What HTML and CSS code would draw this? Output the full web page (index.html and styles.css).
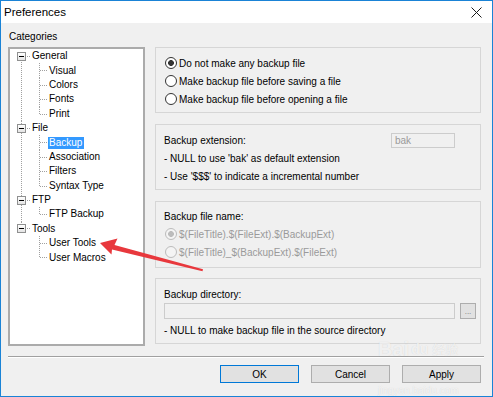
FILE: index.html
```html
<!DOCTYPE html>
<html>
<head>
<meta charset="utf-8">
<link rel="stylesheet" href="styles.css">
</head>
<body>
<div class="window">
  <div class="titlebar">
    <span class="title">Preferences</span>
    <svg class="close" width="11" height="11" viewBox="0 0 11 11"><path d="M0.5 0.5 L10.5 10.5 M10.5 0.5 L0.5 10.5" stroke="#1a1a1a" stroke-width="1" fill="none"/></svg>
  </div>
  <div class="client">
    <div class="cat-label">Categories</div>
    <div class="main">
      <div class="tree">
        <div class="node first">
          <div class="row root"><span class="exp"></span><span class="hdots"></span><span class="label">General</span></div>
          <div class="row child"><span class="label">Visual</span></div>
          <div class="row child"><span class="label">Colors</span></div>
          <div class="row child"><span class="label">Fonts</span></div>
          <div class="row child last"><span class="label">Print</span></div>
        </div>
        <div class="node">
          <div class="row root"><span class="exp"></span><span class="hdots"></span><span class="label">File</span></div>
          <div class="row child"><span class="label selected">Backup</span></div>
          <div class="row child"><span class="label">Association</span></div>
          <div class="row child"><span class="label">Filters</span></div>
          <div class="row child last"><span class="label">Syntax Type</span></div>
        </div>
        <div class="node">
          <div class="row root"><span class="exp"></span><span class="hdots"></span><span class="label">FTP</span></div>
          <div class="row child last"><span class="label">FTP Backup</span></div>
        </div>
        <div class="node lastnode">
          <div class="row root"><span class="exp"></span><span class="hdots"></span><span class="label">Tools</span></div>
          <div class="row child"><span class="label">User Tools</span></div>
          <div class="row child last"><span class="label">User Macros</span></div>
        </div>
      </div>
      <div class="groups">
        <div class="group g1">
          <div class="grow"><span class="radio checked"></span><span class="rtext">Do not make any backup file</span></div>
          <div class="grow"><span class="radio"></span><span class="rtext">Make backup file before saving a file</span></div>
          <div class="grow"><span class="radio"></span><span class="rtext">Make backup file before opening a file</span></div>
        </div>
        <div class="group g2">
          <div class="grow split"><span>Backup extension:</span><span class="input ext">bak</span></div>
          <div class="grow">- NULL to use 'bak' as default extension</div>
          <div class="grow">- Use '$$$' to indicate a incremental number</div>
        </div>
        <div class="group g3">
          <div class="grow">Backup file name:</div>
          <div class="grow disabled"><span class="radio dis checked"></span><span class="rtext">$(FileTitle).$(FileExt).$(BackupExt)</span></div>
          <div class="grow disabled"><span class="radio dis"></span><span class="rtext">$(FileTitle)_$(BackupExt).$(FileExt)</span></div>
        </div>
        <div class="group g4">
          <div class="grow">Backup directory:</div>
          <div class="grow top"><span class="input dir"></span><span class="browse">...</span></div>
          <div class="grow">- NULL to make backup file in the source directory</div>
        </div>
      </div>
    </div>
    <div class="sep"></div>
    <div class="buttons">
      <span class="btn default">OK</span>
      <span class="btn">Cancel</span>
      <span class="btn">Apply</span>
    </div>
  </div>
  <div class="watermark">
    <div class="wm-top"><span class="wm-bai">Bai</span><span class="wm-paw">du</span><span class="wm-cn">经验</span></div>
    <div class="wm-url">jingyan.baidu.com</div>
  </div>
  <svg class="arrow" width="493" height="397" viewBox="0 0 493 397">
    <polygon points="100,243 117.5,238.5 114.5,245 203,269.3 202.5,271.2 112,249.5 111.5,254.5" fill="#e8383d"/>
  </svg>
</div>
</body>
</html>
```

FILE: styles.css
```css
html, body {
  margin: 0;
  padding: 0;
  background: #ffffff;
}
body {
  font-family: "Liberation Sans", Arial, sans-serif;
  font-size: 10px;
  color: #000;
}
.window {
  width: 493px;
  height: 397px;
  box-sizing: border-box;
  border: 1px solid #1a83d6;
  background: #f0f0f0;
  position: relative;
  display: flex;
  flex-direction: column;
  overflow: hidden;
}
.titlebar {
  height: 22px;
  background: #fff;
  display: flex;
  align-items: center;
  justify-content: space-between;
  padding: 0 10px 0 3px;
  flex: none;
}
.title {
  font-size: 11.5px;
  color: #000;
}
.close {
  display: block;
}
.client {
  flex: 1;
  display: flex;
  flex-direction: column;
  padding: 7px 11px 0 7px;
}
.cat-label {
  line-height: 14px;
  height: 14px;
  padding-left: 1px;
}
.main {
  display: flex;
  gap: 10px;
  margin-top: 3px;
}
.tree {
  width: 137px;
  height: 299px;
  box-sizing: border-box;
  border: 2px solid #ababab;
  background: #fff;
}
.node {
  background-image: repeating-linear-gradient(to bottom, #a0a0a0 0 1px, transparent 1px 2px);
  background-repeat: no-repeat;
  background-position: 11px 0;
  background-size: 1px 100%;
}
.node.first {
  background-position: 11px 7px;
  background-size: 1px calc(100% - 7px);
}
.node.lastnode {
  background-size: 1px 7px;
}
.row {
  height: 14.4px;
  display: flex;
  align-items: center;
  white-space: nowrap;
}
.root {
  padding-left: 7px;
}
.exp {
  width: 9px;
  height: 9px;
  box-sizing: border-box;
  border: 1px solid #8f9090;
  background:
    linear-gradient(#000, #000) center / 5px 1px no-repeat,
    linear-gradient(#ffffff, #e4e4e4);
  flex: none;
}
.hdots {
  width: 4px;
  height: 1px;
  margin-left: 1px;
  background: repeating-linear-gradient(to right, #a0a0a0 0 1px, transparent 1px 2px);
  flex: none;
}
.root .label {
  padding-left: 1px;
}
.child {
  padding-left: 38px;
  background:
    repeating-linear-gradient(to bottom, #a0a0a0 0 1px, transparent 1px 2px) 29px 0 / 1px 100% no-repeat,
    repeating-linear-gradient(to right, #a0a0a0 0 1px, transparent 1px 2px) 30px 7px / 8px 1px no-repeat;
}
.child.last {
  background:
    repeating-linear-gradient(to bottom, #a0a0a0 0 1px, transparent 1px 2px) 29px 0 / 1px 8px no-repeat,
    repeating-linear-gradient(to right, #a0a0a0 0 1px, transparent 1px 2px) 30px 7px / 8px 1px no-repeat;
}
.label {
  line-height: 12px;
  padding: 0 1px;
}
.label.selected {
  background: #3399ff;
  color: #fff;
  padding: 0 2px 0 1px;
}
.groups {
  width: 326px;
  display: flex;
  flex-direction: column;
}
.group {
  box-sizing: border-box;
  border: 1px solid #d6d6d6;
  padding: 6px 4px 0 8px;
}
.g1 { height: 66px; }
.g2 { height: 66px; margin-top: 11px; }
.g3 { height: 67px; margin-top: 11px; padding-top: 5px; }
.g4 { height: 66px; margin-top: 10px; }
.grow {
  height: 18px;
  display: flex;
  align-items: center;
  white-space: nowrap;
}
.grow.top {
  align-items: flex-start;
}
.grow.split {
  justify-content: space-between;
  padding-right: 21px;
}
.radio {
  width: 12px;
  height: 12px;
  box-sizing: border-box;
  border: 1px solid #333;
  border-radius: 50%;
  background: #fff;
  margin-left: 1px;
  flex: none;
}
.radio.checked {
  background: radial-gradient(circle, #333 0 2.6px, transparent 3.2px), #fff;
}
.radio.dis {
  border-color: #bcbcbc;
  background: #f4f4f4;
}
.radio.dis.checked {
  background: radial-gradient(circle, #bcbcbc 0 2.6px, transparent 3.2px), #f4f4f4;
}
.rtext {
  margin-left: 2px;
}
.disabled {
  color: #9a9a9a;
}
.input {
  box-sizing: border-box;
  height: 15px;
  border: 1px solid #cccccc;
  background: #f0f0f0;
  color: #9a9a9a;
  line-height: 13px;
  padding-left: 3px;
}
.input.ext {
  width: 64px;
}
.input.dir {
  flex: 1;
  height: 16px;
}
.browse {
  width: 16px;
  height: 16px;
  box-sizing: border-box;
  border: 1px solid #adadad;
  background: #e1e1e1;
  margin-left: 5px;
  color: #777;
  font-size: 8px;
  line-height: 16px;
  text-align: center;
  flex: none;
}
.sep {
  margin: 10px -3px 0 0;
  height: 0;
  border-top: 1px solid #a0a0a0;
  border-bottom: 1px solid #ffffff;
}
.buttons {
  display: flex;
  justify-content: flex-end;
  gap: 12px;
  margin-top: 7px;
}
.btn {
  width: 79px;
  height: 18px;
  box-sizing: border-box;
  border: 1px solid #adadad;
  background: #e1e1e1;
  display: flex;
  align-items: center;
  justify-content: center;
}
.btn.default {
  border-color: #0078d7;
}
.arrow {
  position: absolute;
  left: -1px;
  top: -1px;
  pointer-events: none;
}
.watermark {
  position: absolute;
  left: 377px;
  top: 338px;
  color: rgba(255, 255, 255, 0.7);
  text-shadow: 0 0 1px rgba(0, 0, 0, 0.14);
  pointer-events: none;
}
.wm-top {
  display: flex;
  align-items: flex-end;
  line-height: 20px;
}
.wm-bai {
  font-size: 20px;
  font-weight: bold;
}
.wm-paw {
  font-size: 14px;
  font-weight: bold;
  margin-left: 2px;
}
.wm-cn {
  font-family: "Noto Sans CJK SC", sans-serif;
  font-size: 13px;
  margin-left: 4px;
}
.wm-url {
  font-size: 10px;
  line-height: 11px;
  margin-top: 26px;
}
```
